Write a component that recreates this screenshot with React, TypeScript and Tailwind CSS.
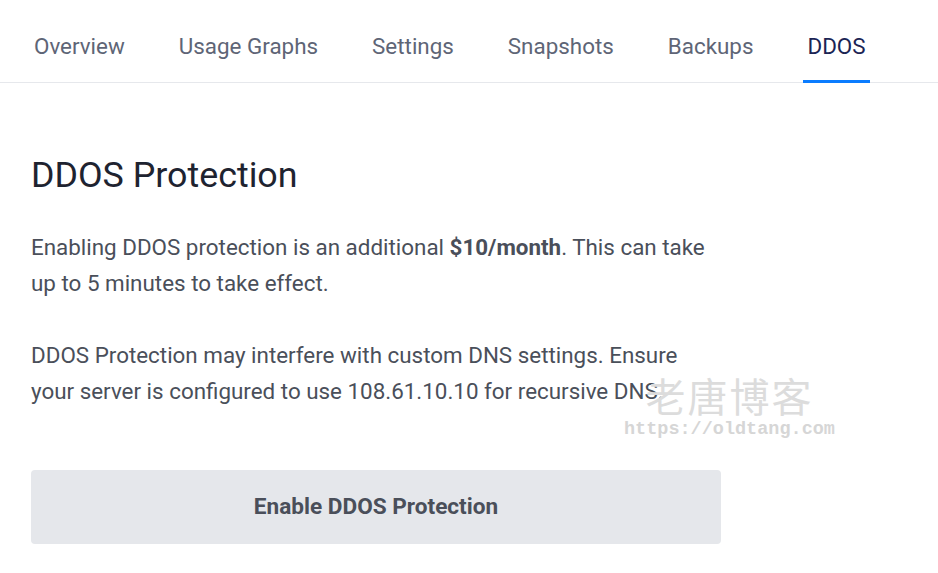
import React from "react";

const tabs = ["Overview", "Usage Graphs", "Settings", "Snapshots", "Backups", "DDOS"];

export default function App() {
  const active = "DDOS";
  return (
    <div
      className="relative min-h-[573px] w-full bg-white"
      style={{ fontFamily: "Roboto, 'Noto Sans', sans-serif" }}
    >
      {/* tab bar */}
      <nav className="flex h-[83px] items-stretch gap-[46px] border-b border-[#e6e8ec] pl-[30px]">
        {tabs.map((t) => (
          <div
            key={t}
            className={
              "flex items-center px-1 pt-[13px] text-[22.4px] border-b-[3px] -mb-px " +
              (t === active
                ? "border-[#0a7cff] text-[#1b2454]"
                : "border-transparent text-[#5e6576]")
            }
          >
            {t}
          </div>
        ))}
      </nav>

      {/* content */}
      <main className="w-[721px] pl-[31px] pt-[70px]">
        <h1 className="text-[35.8px] leading-[44px] text-[#1e2330]">DDOS Protection</h1>
        <p className="mt-[32px] text-[22.4px] leading-[36px] text-[#4a4f5a]">
          Enabling DDOS protection is an additional <strong className="font-bold">$10/month</strong>. This can take up
          to 5 minutes to take effect.
        </p>
        <p className="mt-[36px] text-[22.4px] leading-[36px] text-[#4a4f5a]">
          DDOS Protection may interfere with custom DNS settings. Ensure your server is configured to use 108.61.10.10
          for recursive DNS.
        </p>
        <button className="mt-[61px] flex h-[74px] w-full items-center justify-center rounded-[4px] bg-[#e5e7eb] text-[22.6px] font-bold text-[#4a4f5a]">
          Enable DDOS Protection
        </button>
      </main>

      {/* site watermark */}
      <div className="pointer-events-none absolute left-[624px] top-[371px] flex flex-col items-center">
        <span
          className="text-[40px] leading-[48px] tracking-[2px] text-[#dcdcdc]"
          style={{ fontFamily: "'Noto Sans CJK SC', sans-serif" }}
        >
          老唐博客
        </span>
        <span
          className="text-[18.5px] leading-[22px] font-bold text-[#d6d6d6]"
          style={{ fontFamily: "'Liberation Mono', monospace" }}
        >
          https://oldtang.com
        </span>
      </div>
    </div>
  );
}
